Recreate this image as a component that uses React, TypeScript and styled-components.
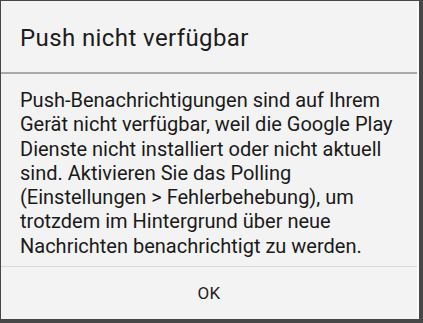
import React from 'react';
import styled, { createGlobalStyle } from 'styled-components';

const GlobalStyle = createGlobalStyle`
    html, body {
        margin: 0;
        padding: 0;
        background: #474747;
    }
    body {
        width: 423px;
        height: 323px;
        overflow: hidden;
        font-family: Roboto, 'Noto Sans', sans-serif;
    }
`;

const App: React.FC = () => {
    return (
        <>
            <GlobalStyle />
            <Screen>
                <Dialog>
                    <Title>Push nicht verfügbar</Title>
                    <Message>
                        Push-Benachrichtigungen sind auf Ihrem Gerät nicht verfügbar, weil die Google Play
                        Dienste nicht installiert oder nicht aktuell sind. Aktivieren Sie das Polling
                        (Einstellungen &gt; Fehlerbehebung), um trotzdem im Hintergrund über neue
                        Nachrichten benachrichtigt zu werden.
                    </Message>
                    <ButtonBar>
                        <DialogButton>OK</DialogButton>
                    </ButtonBar>
                </Dialog>
            </Screen>
        </>
    );
};

const Screen = styled.div`
    width: 423px;
    height: 323px;
    padding: 1px 4px 4px 1px;
    box-sizing: border-box;
    background: #474747;
`;

const Dialog = styled.div`
    height: 100%;
    display: flex;
    flex-direction: column;
    background: #f3f3f3;
    border-right: 2px solid #fbfbfb;
    box-sizing: border-box;
`;

const Title = styled.div`
    height: 73px;
    display: flex;
    align-items: center;
    padding: 0 19px;
    font-size: 24px;
    letter-spacing: 0.4px;
    color: #1c1c1c;
    border-bottom: 2px solid #a9a9a9;
    padding-top: 2px;
    box-sizing: border-box;
    flex-shrink: 0;
`;

const Message = styled.div`
    padding: 14px 6px 0 19px;
    font-size: 20px;
    line-height: 24.3px;
    color: #1a1a1a;
    flex: 1;
`;

const ButtonBar = styled.div`
    display: flex;
    border-top: 1px solid #d9d9d9;
    height: 52px;
    flex-shrink: 0;
`;

const DialogButton = styled.div`
    flex: 1;
    display: flex;
    align-items: center;
    justify-content: center;
    font-size: 17px;
    letter-spacing: 0.3px;
    color: #1e1e1e;
    padding-bottom: 1px;
`;

export default App;
